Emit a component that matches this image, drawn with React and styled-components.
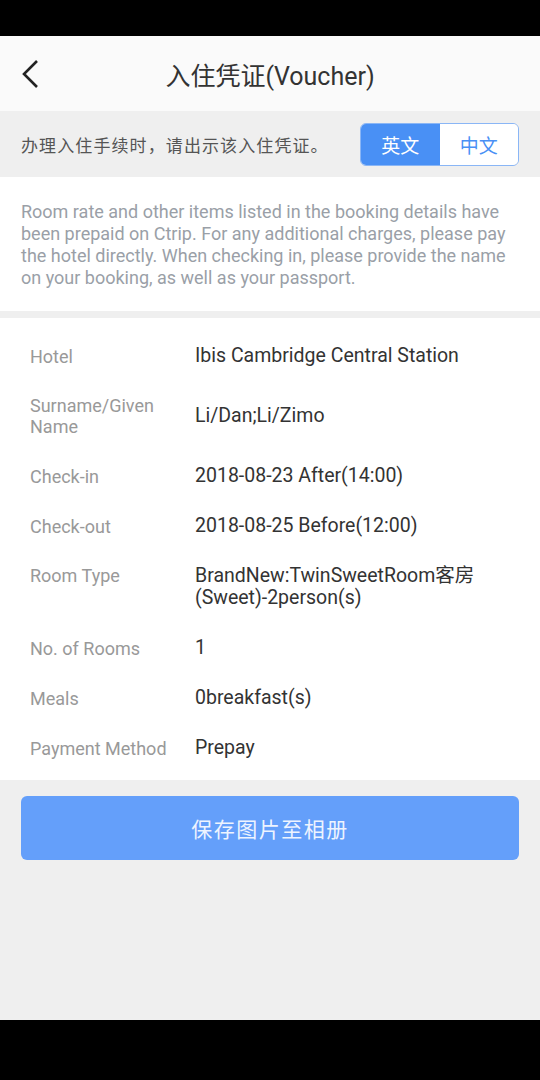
import React, { useState } from "react";
import styled, { createGlobalStyle } from "styled-components";

const Global = createGlobalStyle`
  html, body {
    margin: 0;
    padding: 0;
    background: #000;
  }
  body {
    font-family: Roboto, "Noto Sans CJK SC", "Noto Sans", sans-serif;
  }
`

const Screen = styled.div`
  width: 540px;
  height: 1080px;
  display: flex;
  flex-direction: column;
  background: #000;
`

const StatusBar = styled.div`
  height: 36px;
  flex-shrink: 0;
  background: #000;
`

const NavBar = styled.div`
  height: 60px;
  flex-shrink: 0;
  background: #000;
`

const Page = styled.div`
  flex: 1;
  background: #efefef;
  display: flex;
  flex-direction: column;
`

const Header = styled.div`
  height: 75px;
  background: #fafafa;
  display: grid;
  grid-template-columns: 60px 1fr 60px;
  align-items: center;
  .back {
    display: flex;
    align-items: center;
    padding-left: 20px;
  }
  .title {
    text-align: center;
    font-size: 25px;
    color: #333;
  }
`

const Notice = styled.div`
  height: 66px;
  display: flex;
  align-items: center;
  justify-content: space-between;
  padding: 0 21px;
  color: #555;
  font-size: 17px;
  letter-spacing: 1.1px;
`

const Toggle = styled.div`
  display: flex;
  width: 159px;
  height: 43px;
  border: 1px solid #8ab6f6;
  border-radius: 6px;
  overflow: hidden;
  box-sizing: border-box;
  letter-spacing: 0;
`

const ToggleBtn = styled.button`
  flex: 1;
  border: none;
  font-family: inherit;
  font-size: 19px;
  cursor: pointer;
  background: ${p => (p.active ? "#4990f5" : "#fff")};
  color: ${p => (p.active ? "#fff" : "#4990f5")};
`

const Intro = styled.div`
  background: #fff;
  padding: 24px 21px 22px;
  margin-bottom: 7px;
  color: #9a9fa7;
  font-size: 18px;
  line-height: 22px;
`

const Details = styled.div`
  background: #fff;
  padding: 13px 0 7px;
`

const Row = styled.div`
  display: flex;
  align-items: ${p => (p.top ? "flex-start" : "center")};
  padding: 14px 20px 14px 30px;
  .label {
    width: 165px;
    flex-shrink: 0;
    color: #999;
    font-size: 18px;
    line-height: 21px;
  }
  .value {
    flex: 1;
    color: #333;
    font-size: 19.5px;
    line-height: 22px;
  }
`

const SaveButton = styled.button`
  margin: 16px 21px 0;
  height: 64px;
  border: none;
  border-radius: 6px;
  background: #649ffa;
  color: #eef4ff;
  font-family: inherit;
  font-size: 21px;
  letter-spacing: 1.5px;
`

const rows = [
  { label: "Hotel", value: "Ibis Cambridge Central Station" },
  { label: "Surname/Given Name", value: "Li/Dan;Li/Zimo" },
  { label: "Check-in", value: "2018-08-23 After(14:00)" },
  { label: "Check-out", value: "2018-08-25 Before(12:00)" },
  { label: "Room Type", value: "BrandNew:TwinSweetRoom客房(Sweet)-2person(s)", top: true },
  { label: "No. of Rooms", value: "1" },
  { label: "Meals", value: "0breakfast(s)" },
  { label: "Payment Method", value: "Prepay" },
]

export default function App() {
  const [lang, setLang] = useState("en");
  return (
    <Screen>
      <Global />
      <StatusBar />
      <Page>
        <Header>
          <div className="back">
            <svg width="22" height="32" viewBox="0 0 22 32">
              <path d="M17 3 L4 16 L17 29" fill="none" stroke="#222" strokeWidth="2.6" />
            </svg>
          </div>
          <div className="title">入住凭证(Voucher)</div>
          <div />
        </Header>
        <Notice>
          <span>办理入住手续时，请出示该入住凭证。</span>
          <Toggle>
            <ToggleBtn active={lang === "en"} onClick={() => setLang("en")}>英文</ToggleBtn>
            <ToggleBtn active={lang === "zh"} onClick={() => setLang("zh")}>中文</ToggleBtn>
          </Toggle>
        </Notice>
        <Intro>
          Room rate and other items listed in the booking details have been prepaid on Ctrip. For any additional charges, please pay the hotel directly. When checking in, please provide the name on your booking, as well as your passport.
        </Intro>
        <Details>
          {rows.map(r => (
            <Row key={r.label} top={r.top}>
              <div className="label">{r.label}</div>
              <div className="value">{r.value}</div>
            </Row>
          ))}
        </Details>
        <SaveButton>保存图片至相册</SaveButton>
      </Page>
      <NavBar />
    </Screen>
  );
}
